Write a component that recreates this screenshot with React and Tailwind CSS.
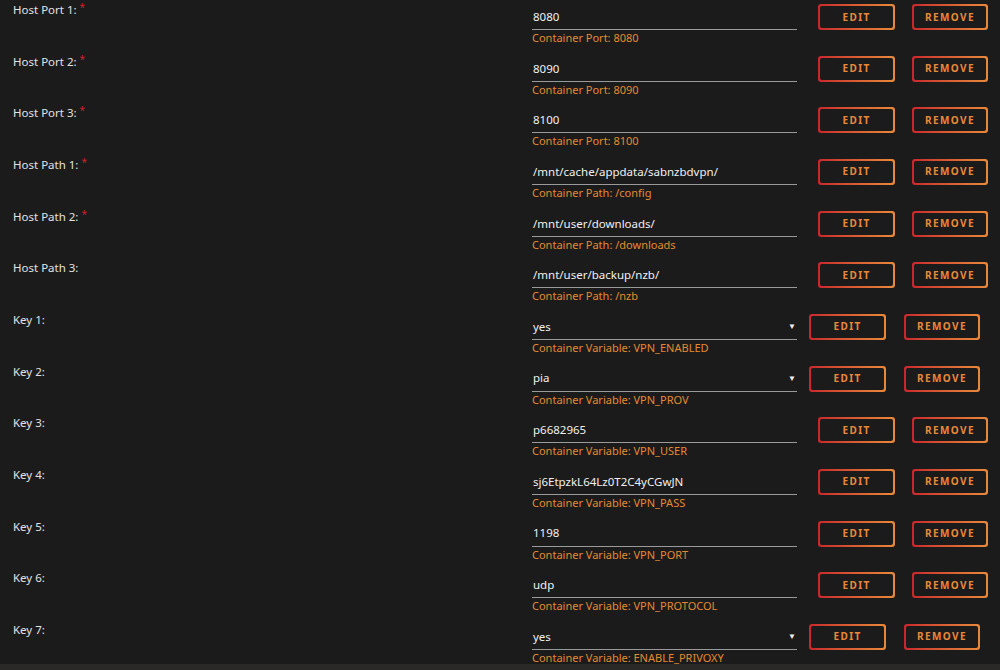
import React from 'react';

const rows = [
  { label: 'Host Port 1:', req: true, value: '8080', note: 'Container Port: 8080' },
  { label: 'Host Port 2:', req: true, value: '8090', note: 'Container Port: 8090' },
  { label: 'Host Port 3:', req: true, value: '8100', note: 'Container Port: 8100' },
  { label: 'Host Path 1:', req: true, value: '/mnt/cache/appdata/sabnzbdvpn/', note: 'Container Path: /config' },
  { label: 'Host Path 2:', req: true, value: '/mnt/user/downloads/', note: 'Container Path: /downloads' },
  { label: 'Host Path 3:', value: '/mnt/user/backup/nzb/', note: 'Container Path: /nzb' },
  { label: 'Key 1:', value: 'yes', note: 'Container Variable: VPN_ENABLED', select: true },
  { label: 'Key 2:', value: 'pia', note: 'Container Variable: VPN_PROV', select: true },
  { label: 'Key 3:', value: 'p6682965', note: 'Container Variable: VPN_USER' },
  { label: 'Key 4:', value: 'sj6EtpzkL64Lz0T2C4yCGwJN', note: 'Container Variable: VPN_PASS' },
  { label: 'Key 5:', value: '1198', note: 'Container Variable: VPN_PORT' },
  { label: 'Key 6:', value: 'udp', note: 'Container Variable: VPN_PROTOCOL' },
  { label: 'Key 7:', value: 'yes', note: 'Container Variable: ENABLE_PRIVOXY', select: true },
];

function Btn({ children, className }) {
  return (
    <div className={'h-[26px] rounded-[3px] bg-gradient-to-r from-[#c9252c] to-[#e8893a] p-[2px] ' + className}>
      <div className="flex h-[22px] items-center justify-center rounded-[2px] bg-[#1c1b1b] text-[10px] font-bold tracking-[1.4px] text-[#e8893a]">
        {children}
      </div>
    </div>
  );
}

export default function App() {
  return (
    <div className="h-[670px] w-[1000px] overflow-hidden bg-[#1c1b1b]" style={{ fontFamily: '"Noto Sans", "Open Sans", sans-serif' }}>
      {rows.map((r, i) => (
        <div key={i} className={'flex items-start ' + (i === rows.length - 1 ? 'h-[44px]' : 'h-[51.67px]')}>
          <div className="w-[532px] pl-[13px] pt-[2px] text-[11.5px] leading-4 text-[#e2e2e2]">
            {r.label}
            {r.req && <span className="relative -top-[3px] ml-[3px] text-[10px] text-[#d02030]">*</span>}
          </div>
          <div className="w-[265px] pt-[4px]">
            <div className="flex h-[26px] items-center justify-between border-b border-[#9a9a9a] pl-[1px] text-[11.5px] text-[#f0f0f0]">
              <span>{r.value}</span>
              {r.select && <span className="pr-[1px] text-[8px] text-[#f0f0f0]">▼</span>}
            </div>
            <div className="pt-[1px] text-[11px] leading-[14px] text-[#e38a30]">{r.note}</div>
          </div>
          <div className={'flex items-start pt-[4px] ' + (r.select ? 'ml-[12px] gap-[18px]' : 'ml-[21px] gap-[17px]')}>
            <Btn className="w-[77px]">EDIT</Btn>
            <Btn className="w-[76px]">REMOVE</Btn>
          </div>
        </div>
      ))}
      <div className="h-[10px] bg-[#2a2928]" />
    </div>
  );
}
